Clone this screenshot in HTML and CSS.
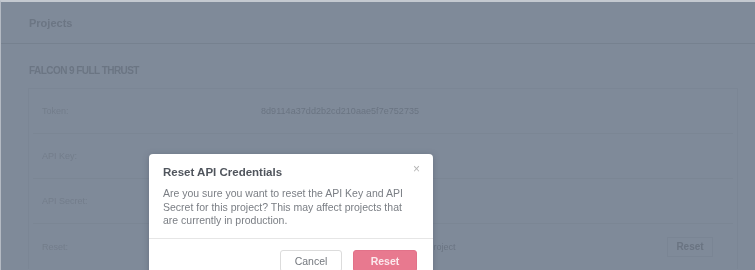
FILE: index.html
```html
<!DOCTYPE html>
<html>
<head>
<meta charset="utf-8">
<link rel="stylesheet" href="styles.css">
</head>
<body>
<div class="page">
  <header class="page-head">Projects</header>
  <section class="project">
    <h2 class="project-title">FALCON 9 FULL THRUST</h2>
    <div class="card">
      <div class="row"><span class="label">Token:</span><span class="value token">8d9114a37dd2b2cd210aae5f7e752735</span></div>
      <div class="row"><span class="label">API Key:</span><span class="value"></span></div>
      <div class="row"><span class="label">API Secret:</span><span class="value"></span></div>
      <div class="row"><span class="label">Reset:</span><span class="value">Reset the API Key and API Secret for this project</span><span class="bg-btn">Reset</span></div>
    </div>
  </section>
</div>
<div class="overlay">
  <div class="modal">
    <span class="close">&#215;</span>
    <h3 class="modal-title">Reset API Credentials</h3>
    <p class="modal-body">Are you sure you want to reset the API Key and API Secret for this project? This may affect projects that are currently in production.</p>
    <div class="modal-foot">
      <button class="btn btn-cancel">Cancel</button>
      <button class="btn btn-reset">Reset</button>
    </div>
  </div>
</div>
</body>
</html>
```
FILE: styles.css
```css
html, body {
  margin: 0;
  padding: 0;
  width: 755px;
  height: 270px;
  overflow: hidden;
  background: #7f8a99;
  font-family: "Liberation Sans", Arial, sans-serif;
}
.page {
  height: 270px;
  box-sizing: border-box;
  border-top: 2px solid #c4c9d0;
  border-left: 1px solid #b4bac3;
  filter: blur(0.5px);
}
.page-head {
  height: 42px;
  box-sizing: border-box;
  padding-left: 28px;
  display: flex;
  align-items: center;
  font-size: 11px;
  font-weight: bold;
  color: #6c7684;
  border-bottom: 1px solid #76818f;
}
.project {
  padding: 20px 17px 0 28px;
}
.project-title {
  margin: 0 0 10px;
  font-size: 10px;
  letter-spacing: -0.55px;
  line-height: 14px;
  font-weight: bold;
  color: #6b7583;
}
.card {
  border: 1px solid #7b8695;
  border-bottom: none;
  margin-left: -1px;
}
.row {
  height: 45px;
  margin: 0 4px;
  padding: 0 20px 0 9px;
  display: flex;
  align-items: center;
  border-bottom: 1px solid #7b8694;
  box-sizing: border-box;
  font-size: 9px;
  color: #6f7987;
}
.row:last-child { border-bottom: none; }
.label {
  width: 219px;
  flex: none;
  color: #737d8b;
}
.value {
  flex: 1;
  color: #6a7482;
}
.token { letter-spacing: 0.05px; }
.bg-btn {
  width: 46px;
  height: 20px;
  box-sizing: border-box;
  border: 1px solid #7a8594;
  display: flex;
  align-items: center;
  justify-content: center;
  font-weight: bold;
  font-size: 10px;
  color: #6a7482;
}
.overlay {
  position: fixed;
  inset: 0;
  padding: 154px 0 0 149px;
  box-sizing: border-box;
}
.modal {
  position: relative;
  width: 284px;
  height: 130px;
  background: #fff;
  border-radius: 4px;
  box-shadow: 0 1px 6px rgba(60, 70, 85, 0.35);
}
.close {
  position: absolute;
  right: 13px;
  top: 8px;
  font-size: 12px;
  color: #b5b5b5;
}
.modal-title {
  margin: 0;
  padding: 11px 14px 0;
  font-size: 11.5px;
  line-height: 14px;
  font-weight: bold;
  color: #50555d;
}
.modal-body {
  margin: 0;
  padding: 8px 14px 10px;
  font-size: 10.5px;
  line-height: 13.5px;
  color: #7a7e84;
  border-bottom: 1px solid #e6e6e6;
}
.modal-foot {
  display: flex;
  justify-content: flex-end;
  gap: 11px;
  padding: 11px 16px 0 0;
}
.btn {
  height: 22px;
  border-radius: 3px;
  font-family: "Liberation Sans", Arial, sans-serif;
  font-size: 10.5px;
  padding: 0;
}
.btn-cancel {
  width: 62px;
  background: #fff;
  border: 1px solid #dcdcdc;
  color: #74787e;
}
.btn-reset {
  width: 64px;
  background: #e8798f;
  border: 1px solid #e27289;
  color: #fbe9ed;
  font-weight: bold;
}
```
